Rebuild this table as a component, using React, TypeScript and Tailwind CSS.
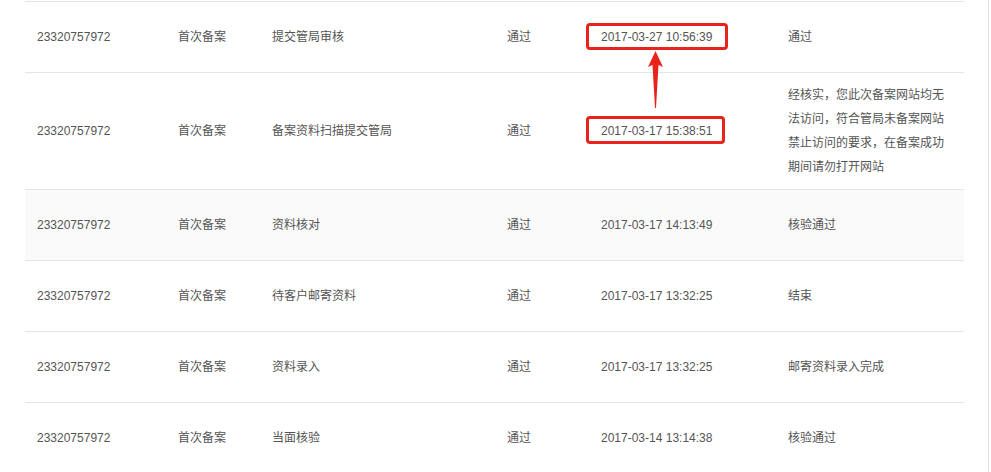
const rows = [
  { id: "23320757972", type: "首次备案", step: "提交管局审核", result: "通过", time: "2017-03-27 10:56:39", note: "通过" },
  {
    id: "23320757972",
    type: "首次备案",
    step: "备案资料扫描提交管局",
    result: "通过",
    time: "2017-03-17 15:38:51",
    note: "经核实，您此次备案网站均无法访问，符合管局未备案网站禁止访问的要求，在备案成功期间请勿打开网站",
  },
  { id: "23320757972", type: "首次备案", step: "资料核对", result: "通过", time: "2017-03-17 14:13:49", note: "核验通过" },
  { id: "23320757972", type: "首次备案", step: "待客户邮寄资料", result: "通过", time: "2017-03-17 13:32:25", note: "结束" },
  { id: "23320757972", type: "首次备案", step: "资料录入", result: "通过", time: "2017-03-17 13:32:25", note: "邮寄资料录入完成" },
  { id: "23320757972", type: "首次备案", step: "当面核验", result: "通过", time: "2017-03-14 13:14:38", note: "核验通过" },
];

export default function App() {
  return (
    <div
      className="w-[991px] h-[472px] overflow-hidden bg-white"
      style={{ fontFamily: '"Liberation Sans", Arial, "Noto Sans CJK SC", sans-serif' }}
    >
      <div className="relative w-[989px] h-full border-r border-[#e3e3e3] pt-[1px] pl-[25px]">
        <table className="w-[939px] table-fixed border-collapse text-[12px] text-[#555]">
          <colgroup>
            <col className="w-[141px]" />
            <col className="w-[94px]" />
            <col className="w-[235px]" />
            <col className="w-[94px]" />
            <col className="w-[187px]" />
            <col className="w-[188px]" />
          </colgroup>
          <tbody>
            {rows.map((r, i) => (
              <tr key={i} className={`border-t border-[#e4e4e4] ${i === 2 ? "bg-[#fafafa]" : ""}`}>
                <td className="h-[71px] px-3 align-middle">{r.id}</td>
                <td className="px-3 align-middle">{r.type}</td>
                <td className="px-3 align-middle">{r.step}</td>
                <td className="px-3 align-middle">{r.result}</td>
                <td className="px-3 align-middle">
                  <span className="relative inline-block">
                    {r.time}
                    {/* hand-drawn highlight boxes */}
                    {i === 0 && (
                      <span className="absolute left-[-15px] top-[-5px] w-[142px] h-[27px] border-[3px] border-[#e8231b] rounded-[4px]" />
                    )}
                    {i === 1 && (
                      <span className="absolute left-[-15px] top-[-6px] w-[139px] h-[28px] border-[3px] border-[#e8231b] rounded-[4px]" />
                    )}
                  </span>
                </td>
                <td className={`px-3 align-middle ${i === 1 ? "py-[10px] leading-[24px]" : ""}`}>{r.note}</td>
              </tr>
            ))}
          </tbody>
        </table>
        <svg className="absolute left-[647px] top-[51px]" width="17" height="58" viewBox="0 0 17 58">
          <path d="M8.5 0 L16 16 L11.5 14 L9 57 L8 57 L5.5 14 L1 16 Z" fill="#e8231b" />
        </svg>
      </div>
    </div>
  );
}
